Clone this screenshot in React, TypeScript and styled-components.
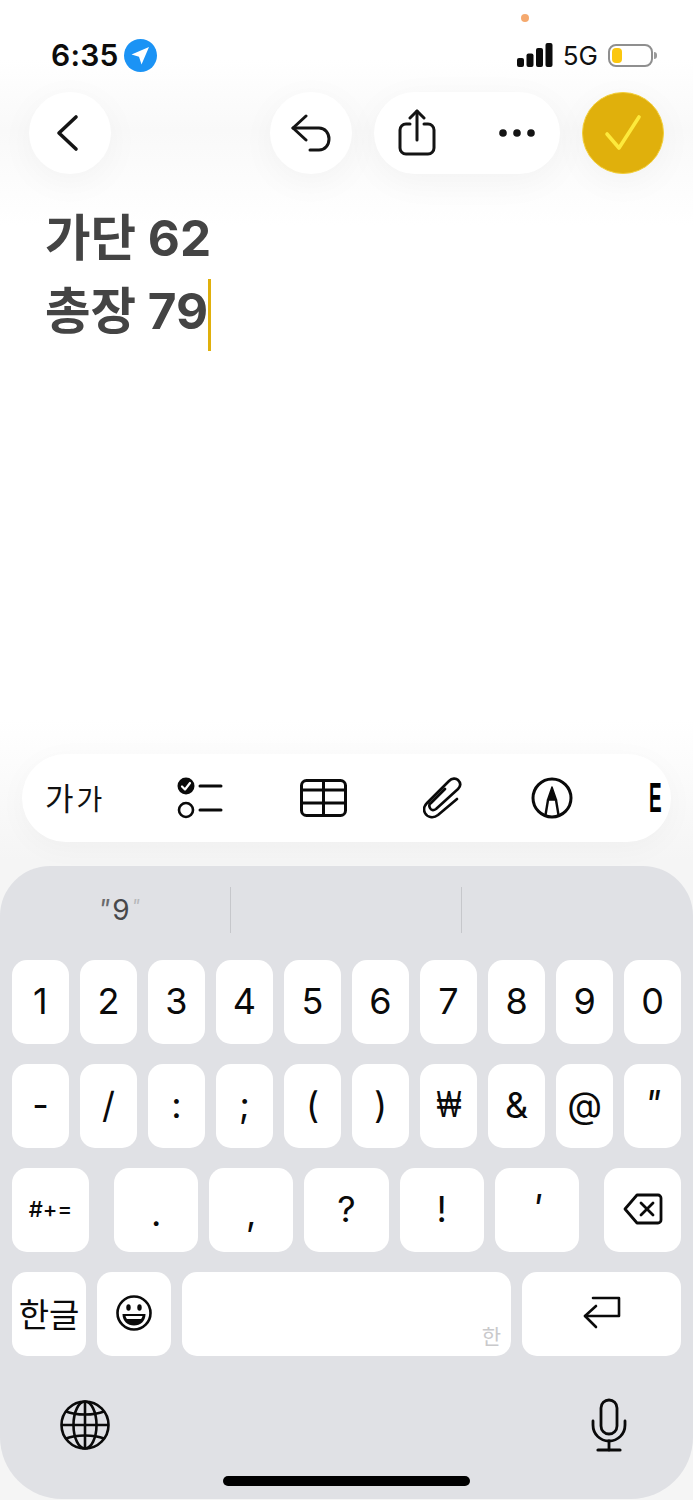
import styled, { createGlobalStyle } from 'styled-components';

const GlobalStyle = createGlobalStyle`
    * {
        box-sizing: border-box;
    }
    body {
        margin: 0;
        background: #ffffff;
        font-family: Inter, "Noto Sans CJK KR", sans-serif;
    }
`;

const Screen = styled.div`
    position: relative;
    width: 693px;
    height: 1500px;
    display: flex;
    flex-direction: column;
    overflow: hidden;
    background: linear-gradient(
        180deg,
        #ffffff 60px,
        #f9f9f9 130px,
        #ffffff 225px,
        #ffffff 720px,
        #f5f5f5 860px
    );
`;

const PrivacyDot = styled.span`
    position: absolute;
    left: 521px;
    top: 14px;
    width: 8px;
    height: 8px;
    border-radius: 50%;
    background: #f5a96e;
`;

const StatusBar = styled.header`
    height: 92px;
    padding: 39px 37px 0 51px;
    display: flex;
    justify-content: space-between;
    align-items: flex-start;
`;

const StatusGroup = styled.div<{ $gap: number }>`
    height: 32px;
    display: flex;
    align-items: center;
    gap: ${(p) => p.$gap}px;
`;

const Time = styled.span`
    font-size: 30px;
    font-weight: 600;
    letter-spacing: 0.2px;
    color: #0c0c0c;
`;

const Network = styled.span`
    font-size: 26px;
    font-weight: 400;
    color: #111111;
`;

const Battery = styled.span`
    position: relative;
    width: 45px;
    height: 23px;
    margin-right: 3px;
    padding: 2px;
    border: 2px solid #8f8f8f;
    border-radius: 8px;
    display: flex;
    &::after {
        content: '';
        position: absolute;
        right: -6px;
        top: 6px;
        width: 3px;
        height: 7px;
        border-radius: 0 3px 3px 0;
        background: #9a9a9a;
    }
`;

const BatteryFill = styled.span`
    width: 10px;
    border-radius: 4px;
    background: #fbc70f;
`;

const NavBar = styled.nav`
    height: 82px;
    padding: 0 29px;
    display: flex;
    align-items: center;
    gap: 22px;
`;

const RoundButton = styled.div<{ $back?: boolean; $accent?: boolean }>`
    width: 82px;
    height: 82px;
    flex: none;
    padding-right: ${(p) => (p.$back ? '6px' : '0')};
    display: flex;
    align-items: center;
    justify-content: center;
    border-radius: 50%;
    margin-right: ${(p) => (p.$back ? 'auto' : '0')};
    background: ${(p) => (p.$accent ? '#e0b00c' : '#ffffff')};
    border: ${(p) => (p.$accent ? '1px solid #f3cf3a' : 'none')};
    box-shadow: 0 8px 36px rgba(0, 0, 0, 0.04);
`;

const PillButton = styled.div`
    width: 186px;
    height: 82px;
    padding: 0 25px 0 24px;
    display: flex;
    align-items: center;
    justify-content: space-between;
    border-radius: 41px;
    background: #ffffff;
    box-shadow: 0 8px 36px rgba(0, 0, 0, 0.04);
`;

const Note = styled.main`
    flex: 1;
    padding: 28px 45px 0;
`;

const NoteLine = styled.div`
    height: 73px;
    line-height: 73px;
    font-size: 49.5px;
    font-weight: 700;
    color: #444444;
    display: flex;
    align-items: center;
`;

const Caret = styled.span`
    width: 3px;
    height: 72px;
    margin: 6px 0 0 0;
    background: #e0b00c;
`;

const ToolBar = styled.div`
    height: 88px;
    margin: 0 22px 24px;
    padding-left: 23px;
    display: grid;
    grid-template-columns: 132px 123px 123px 108px 118px 12px;
    align-items: center;
    border-radius: 44px;
    background: #ffffff;
    box-shadow: 0 6px 30px rgba(0, 0, 0, 0.03);
`;

const FontSizeLabel = styled.div`
    display: flex;
    align-items: flex-end;
    gap: 3px;
    color: #111111;
    line-height: 1;
`;

const FontSizeChar = styled.span<{ $size: number }>`
    font-size: ${(p) => p.$size}px;
`;

const NarrowTool = styled.div`
    font-family: "Liberation Sans", sans-serif;
    font-size: 42px;
    font-weight: 700;
    line-height: 34px;
    color: #000000;
    transform: scaleX(0.45);
    transform-origin: left center;
`;

const Keyboard = styled.section`
    height: 633px;
    margin-bottom: 1px;
    padding: 0 12px;
    display: flex;
    flex-direction: column;
    border-radius: 50px 50px 62px 62px;
    background: #e0e1e5;
`;

const Suggestions = styled.div`
    height: 94px;
    margin: 0 -12px;
    display: grid;
    grid-template-columns: 231px 231px 231px;
    align-items: center;
`;

const Suggestion = styled.div<{ $divided?: boolean }>`
    height: 46px;
    margin-top: -6px;
    padding-left: 8px;
    display: flex;
    align-items: center;
    justify-content: center;
    font-size: 28px;
    color: #48484a;
    border-right: ${(p) => (p.$divided ? '1px solid #c6c7cb' : 'none')};
`;

const Quote = styled.span<{ $faint?: boolean }>`
    font-size: ${(p) => (p.$faint ? 18 : 26)}px;
    font-style: italic;
    line-height: 1;
    color: ${(p) => (p.$faint ? '#b6b7ba' : '#6a6a6c')};
    align-self: flex-start;
    margin: ${(p) => (p.$faint ? '11px 0 0 2px' : '9px 2px 0 0')};
`;

const KeyRows = styled.div`
    display: flex;
    flex-direction: column;
    gap: 20px;
`;

const GridRow = styled.div`
    display: grid;
    grid-template-columns: repeat(10, 1fr);
    column-gap: 11.2px;
`;

const FlexRow = styled.div<{ $gap: number }>`
    display: flex;
    gap: ${(p) => p.$gap}px;
`;

const KeyGroup = styled.div`
    flex: 1;
    display: flex;
    gap: 11px;
    margin: 0 14px;
`;

const Key = styled.div<{ $width?: number; $size?: number; $weight?: number; $grow?: boolean }>`
    position: relative;
    height: 84px;
    padding-bottom: 3px;
    flex: ${(p) => (p.$grow ? '1' : p.$width ? `0 0 ${p.$width}px` : '1')};
    display: flex;
    align-items: center;
    justify-content: center;
    border-radius: 15px;
    background: #ffffff;
    font-size: ${(p) => p.$size ?? 36}px;
    font-weight: ${(p) => p.$weight ?? 400};
    color: #0a0a0a;
`;

const SpaceHint = styled.span`
    position: absolute;
    right: 10px;
    bottom: 6px;
    font-size: 21px;
    color: #c9c9cb;
`;

const SlantGlyph = styled.span`
    font-style: italic;
    align-self: flex-start;
    margin-top: 17px;
`;

const LowGlyph = styled.span`
    margin-top: 8px;
`;

const WonGlyph = styled.span`
    font-family: "Liberation Sans", sans-serif;
    transform: scaleX(0.72);
`;

const BottomRow = styled.div`
    height: 94px;
    margin-top: 22px;
    padding: 0 54px 0 48px;
    display: flex;
    align-items: center;
    justify-content: space-between;
`;

const HomeBar = styled.div`
    width: 247px;
    height: 10px;
    margin: 4px auto 0;
    border-radius: 5px;
    background: #000000;
`;

const LocationIcon = () => (
    <svg width="33" height="33" viewBox="0 0 33 33">
        <circle cx="16.5" cy="16.5" r="16.5" fill="#1b93f5" />
        <path d="M25 8 L7.5 15.5 L15 17.8 L17.5 25.5 Z" fill="#ffffff" />
    </svg>
);

const SignalIcon = () => (
    <svg width="36" height="24" viewBox="0 0 36 24" fill="#0c0c0c">
        <rect x="0" y="15" width="7" height="9" rx="2" />
        <rect x="9.5" y="10.5" width="7" height="13.5" rx="2" />
        <rect x="19" y="5" width="7" height="19" rx="2" />
        <rect x="28.5" y="0" width="7" height="24" rx="2" />
    </svg>
);

const BackIcon = () => (
    <svg width="24" height="38" viewBox="0 0 24 38" fill="none" stroke="#141414" strokeWidth="3.6" strokeLinecap="round" strokeLinejoin="round">
        <path d="M21 3 L4 19 L21 35" />
    </svg>
);

const UndoIcon = () => (
    <svg width="40" height="38" viewBox="0 0 40 38" fill="none" stroke="#141414" strokeWidth="3" strokeLinecap="round" strokeLinejoin="round">
        <path d="M15 2 L2 14 L15 26" />
        <path d="M2 14 H28 C34 14 38 19 38 25 C38 31 34 36 28 36 H19" />
    </svg>
);

const ShareIcon = () => (
    <svg width="38" height="48" viewBox="0 0 38 48" fill="none" stroke="#141414" strokeWidth="3" strokeLinecap="round" strokeLinejoin="round">
        <path d="M12 15 H8 a6 6 0 0 0 -6 6 V39 a6 6 0 0 0 6 6 H30 a6 6 0 0 0 6 -6 V21 a6 6 0 0 0 -6 -6 H26" />
        <path d="M19 2 V31" />
        <path d="M12 9 L19 2 L26 9" />
    </svg>
);

const MoreIcon = () => (
    <svg width="36" height="8" viewBox="0 0 36 8" fill="#141414">
        <circle cx="4" cy="4" r="3.8" />
        <circle cx="18" cy="4" r="3.8" />
        <circle cx="32" cy="4" r="3.8" />
    </svg>
);

const CheckIcon = () => (
    <svg width="38" height="38" viewBox="0 0 38 38" fill="none" stroke="#fdea3c" strokeWidth="3.6" strokeLinecap="round" strokeLinejoin="round">
        <path d="M3 20 L15 34 L35 3" />
    </svg>
);

const ChecklistIcon = () => (
    <svg width="46" height="42" viewBox="0 0 46 42" fill="none" stroke="#0a0a0a" strokeWidth="3" strokeLinecap="round">
        <circle cx="9" cy="9" r="8.5" fill="#0a0a0a" stroke="none" />
        <path d="M5 9.5 L8 12.5 L13 6" stroke="#ffffff" strokeWidth="2.2" strokeLinejoin="round" />
        <circle cx="9" cy="33" r="7" strokeWidth="2.6" />
        <path d="M23 9 H44" />
        <path d="M23 33 H44" />
    </svg>
);

const TableIcon = () => (
    <svg width="47" height="38" viewBox="0 0 47 38" fill="none" stroke="#0a0a0a" strokeWidth="3">
        <rect x="1.5" y="1.5" width="44" height="35" rx="5" />
        <path d="M23.5 2 V36" />
        <path d="M2 11 H45" />
        <path d="M2 24 H45" />
    </svg>
);

const ClipIcon = () => (
    <svg width="39" height="42" viewBox="0 0 39 42" fill="none" stroke="#0a0a0a" strokeWidth="2.6" strokeLinecap="round" strokeLinejoin="round">
        <path d="M34 22 L15 38 C10 42 4 40 2 36 C0 32 1 29 4 26 L26 4 C29 1 33 1 35 3 C38 6 38 9 35 12 L13 32 C10 34 8 33 7 31 C6 29 6 27 8 26 L22 12" />
    </svg>
);

const MarkupIcon = () => (
    <svg width="42" height="42" viewBox="0 0 42 42" fill="none" stroke="#0a0a0a" strokeWidth="3">
        <circle cx="21" cy="21" r="19" />
        <path d="M21 10 L16.5 23 H25.5 Z" fill="#0a0a0a" strokeWidth="1.5" strokeLinejoin="round" />
        <path d="M17 23 L14.5 38" strokeWidth="2.4" />
        <path d="M25 23 L27.5 38" strokeWidth="2.4" />
    </svg>
);

const BackspaceIcon = () => (
    <svg width="40" height="32" viewBox="0 0 40 32" fill="none" stroke="#0a0a0a" strokeWidth="2.8" strokeLinecap="round" strokeLinejoin="round">
        <path d="M2 16 L14 2 H35 a3 3 0 0 1 3 3 V27 a3 3 0 0 1 -3 3 H14 Z" />
        <path d="M18 10 L30 22" />
        <path d="M30 10 L18 22" />
    </svg>
);

const ReturnIcon = () => (
    <svg width="38" height="33" viewBox="0 0 38 33" fill="none" stroke="#0a0a0a" strokeWidth="2.6" strokeLinecap="round" strokeLinejoin="round">
        <path d="M10 2 H36 V20 H2" />
        <path d="M13 10 L2 20 L13 31" />
    </svg>
);

const EmojiIcon = () => (
    <svg width="36" height="36" viewBox="0 0 36 36" fill="none" stroke="#0a0a0a" strokeWidth="2.6">
        <circle cx="18" cy="18" r="16.5" />
        <ellipse cx="12.5" cy="12.5" rx="2.2" ry="3.2" fill="#0a0a0a" stroke="none" />
        <ellipse cx="23.5" cy="12.5" rx="2.2" ry="3.2" fill="#0a0a0a" stroke="none" />
        <path d="M6.5 19 H29.5 C29.5 26 24.5 30.5 18 30.5 C11.5 30.5 6.5 26 6.5 19 Z" fill="#0a0a0a" stroke="none" />
        <path d="M9.5 21 H26.5 C26 22.5 25.5 23.5 25 24 H11 C10.5 23.5 10 22.5 9.5 21 Z" fill="#ffffff" stroke="none" />
    </svg>
);

const GlobeIcon = () => (
    <svg width="50" height="50" viewBox="0 0 50 50" fill="none" stroke="#0a0a0a" strokeWidth="2.6">
        <circle cx="25" cy="25" r="23.5" />
        <ellipse cx="25" cy="25" rx="11.5" ry="23.5" />
        <path d="M25 1.5 V48.5" />
        <path d="M1.5 25 H48.5" />
        <path d="M6 11.5 C16 15.5 34 15.5 44 11.5" />
        <path d="M6 38.5 C16 34.5 34 34.5 44 38.5" />
    </svg>
);

const MicIcon = () => (
    <svg width="36" height="54" viewBox="0 0 36 54" fill="none" stroke="#0a0a0a" strokeWidth="2.8" strokeLinecap="round">
        <rect x="10" y="2" width="16" height="34" rx="8" />
        <path d="M2 23 V27 C2 36 9 43 18 43 C27 43 34 36 34 27 V23" />
        <path d="M18 43 V52" />
        <path d="M7 52 H29" strokeWidth="3.2" />
    </svg>
);

const numberKeys = ['1', '2', '3', '4', '5', '6', '7', '8', '9', '0'];
const symbolKeys = ['-', '/', ':', ';', '(', ')'];

const App = () => (
    <Screen>
        <GlobalStyle />
        <PrivacyDot />
        <StatusBar>
            <StatusGroup $gap={5}>
                <Time>6:35</Time>
                <LocationIcon />
            </StatusGroup>
            <StatusGroup $gap={10}>
                <SignalIcon />
                <Network>5G</Network>
                <Battery>
                    <BatteryFill />
                </Battery>
            </StatusGroup>
        </StatusBar>
        <NavBar>
            <RoundButton $back>
                <BackIcon />
            </RoundButton>
            <RoundButton>
                <UndoIcon />
            </RoundButton>
            <PillButton>
                <ShareIcon />
                <MoreIcon />
            </PillButton>
            <RoundButton $accent>
                <CheckIcon />
            </RoundButton>
        </NavBar>
        <Note>
            <NoteLine>가단 62</NoteLine>
            <NoteLine>
                총장 79
                <Caret />
            </NoteLine>
        </Note>
        <ToolBar>
            <FontSizeLabel>
                <FontSizeChar $size={31}>가</FontSizeChar>
                <FontSizeChar $size={28}>가</FontSizeChar>
            </FontSizeLabel>
            <ChecklistIcon />
            <TableIcon />
            <ClipIcon />
            <MarkupIcon />
            <NarrowTool>E</NarrowTool>
        </ToolBar>
        <Keyboard>
            <Suggestions>
                <Suggestion $divided>
                    <Quote>"</Quote>9<Quote $faint>"</Quote>
                </Suggestion>
                <Suggestion $divided />
                <Suggestion />
            </Suggestions>
            <KeyRows>
                <GridRow>
                    {numberKeys.map((k) => (
                        <Key key={k}>{k}</Key>
                    ))}
                </GridRow>
                <GridRow>
                    {symbolKeys.map((k) => (
                        <Key key={k}>{k}</Key>
                    ))}
                    <Key>
                        <WonGlyph>₩</WonGlyph>
                    </Key>
                    <Key>&amp;</Key>
                    <Key>@</Key>
                    <Key>
                        <SlantGlyph>"</SlantGlyph>
                    </Key>
                </GridRow>
                <FlexRow $gap={11}>
                    <Key $width={77} $size={22} $weight={500}>
                        #+=
                    </Key>
                    <KeyGroup>
                        <Key>
                            <LowGlyph>.</LowGlyph>
                        </Key>
                        <Key>
                            <LowGlyph>,</LowGlyph>
                        </Key>
                        <Key>?</Key>
                        <Key>!</Key>
                        <Key>
                            <SlantGlyph>'</SlantGlyph>
                        </Key>
                    </KeyGroup>
                    <Key $width={77}>
                        <BackspaceIcon />
                    </Key>
                </FlexRow>
                <FlexRow $gap={11}>
                    <Key $width={74} $size={33}>
                        한글
                    </Key>
                    <Key $width={74}>
                        <EmojiIcon />
                    </Key>
                    <Key $grow>
                        <SpaceHint>한</SpaceHint>
                    </Key>
                    <Key $width={159}>
                        <ReturnIcon />
                    </Key>
                </FlexRow>
            </KeyRows>
            <BottomRow>
                <GlobeIcon />
                <MicIcon />
            </BottomRow>
            <HomeBar />
        </Keyboard>
    </Screen>
);

export default App;
